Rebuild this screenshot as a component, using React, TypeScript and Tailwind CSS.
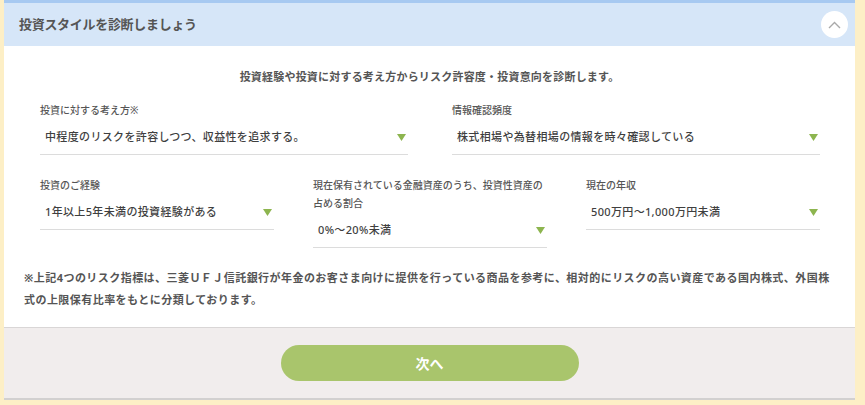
import React from "react";

function Arrow() {
  return (
    <svg width="9" height="7" viewBox="0 0 9 7" className="shrink-0">
      <path d="M0 0 H9 L4.5 7 Z" fill="#8db54f" />
    </svg>
  );
}

function SelectField({ label, value }: { label: React.ReactNode; value: string }) {
  return (
    <div className="flex flex-col">
      <div className="text-[10px] leading-[18px] text-[#555] font-medium">{label}</div>
      <div className="flex h-[36px] items-center justify-between border-b border-[#dcdcdc] pl-[5px] pr-[2px] pt-[2px]">
        <span className="text-[11px] tracking-[0.35px] font-medium text-[#3f3f3f]">{value}</span>
        <Arrow />
      </div>
    </div>
  );
}

export default function App() {
  return (
    <div
      className="flex h-[405px] w-[865px] bg-[#fdefc6] pl-[4px]"
      style={{ fontFamily: '"Noto Sans", "Noto Sans CJK JP", sans-serif' }}
    >
      <div className="flex h-[400px] w-[851px] flex-col border-b-2 border-[#d2d0d0]">
        {/* header */}
        <div className="h-[3px] bg-[#a7c9f1]" />
        <div className="flex h-[43px] items-center justify-between bg-[#d6e6f8] pl-[15px] pr-[7px]">
          <span className="text-[13px] font-bold tracking-[-0.3px] text-[#555]">
            投資スタイルを診断しましょう
          </span>
          <div className="flex h-[27px] w-[27px] items-center justify-center rounded-full bg-white">
            <svg width="13" height="8" viewBox="0 0 13 8">
              <path d="M1 7 L6.5 1.5 L12 7" fill="none" stroke="#a9a9a9" strokeWidth="1.4" />
            </svg>
          </div>
        </div>

        {/* body */}
        <div className="flex flex-col bg-white pt-[22px] pb-[16px]">
          <p className="text-center text-[11px] leading-[18px] tracking-[0.2px] font-bold text-[#555]">
            投資経験や投資に対する考え方からリスク許容度・投資意向を診断します。
          </p>

          <div className="mt-[15px] grid grid-cols-2 gap-x-[44px] pl-[36px] pr-[35px]">
            <SelectField label="投資に対する考え方※" value="中程度のリスクを許容しつつ、収益性を追求する。" />
            <SelectField label="情報確認頻度" value="株式相場や為替相場の情報を時々確認している" />
          </div>

          <div className="mt-[21px] grid grid-cols-3 items-start gap-x-[39px] pl-[36px] pr-[35px]">
            <SelectField label="投資のご経験" value="1年以上5年未満の投資経験がある" />
            <SelectField
              label={
                <>
                  現在保有されている金融資産のうち、投資性資産の
                  <br />
                  占める割合
                </>
              }
              value="0%～20%未満"
            />
            <SelectField label="現在の年収" value="500万円～1,000万円未満" />
          </div>

          <p className="mt-[19px] px-[20px] text-[11px] leading-[22px] tracking-[0.45px] font-bold text-[#555]">
            ※上記4つのリスク指標は、三菱ＵＦＪ信託銀行が年金のお客さま向けに提供を行っている商品を参考に、相対的にリスクの高い資産である国内株式、外国株
            <br />
            式の上限保有比率をもとに分類しております。
          </p>
        </div>

        {/* footer */}
        <div className="flex flex-1 items-center justify-center border-t border-[#d9d6d6] bg-[#f1eded]">
          <button className="flex h-[36px] w-[298px] items-center justify-center rounded-full bg-[#a9c56c] text-[14px] font-bold text-white">
            次へ
          </button>
        </div>
      </div>
    </div>
  );
}
